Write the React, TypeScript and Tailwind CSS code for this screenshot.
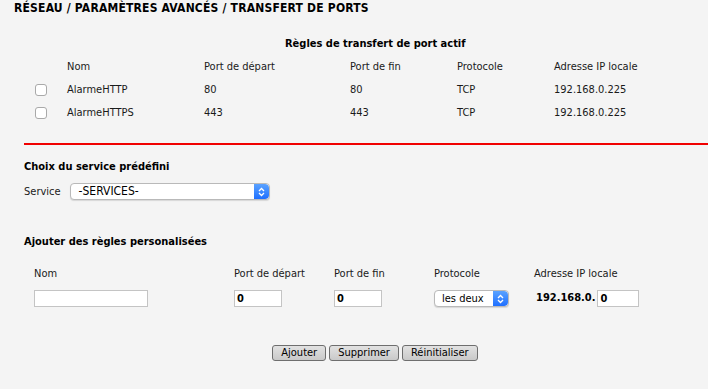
const ACTIVE_RULES = [
  { name: "AlarmeHTTP", start: "80", end: "80", proto: "TCP", ip: "192.168.0.225" },
  { name: "AlarmeHTTPS", start: "443", end: "443", proto: "TCP", ip: "192.168.0.225" },
];

function Arrows() {
  return (
    <div className="flex h-full w-[15px] items-center justify-center rounded-r-[4px] bg-gradient-to-b from-[#5aa2ff] to-[#1f6fff]">
      <svg width="7" height="10" viewBox="0 0 7 10" fill="none" stroke="white" strokeWidth="1.3">
        <path d="M1 4 L3.5 1.5 L6 4" />
        <path d="M1 6 L3.5 8.5 L6 6" />
      </svg>
    </div>
  );
}

function FakeSelect({ value, className, textClass }: { value: string; className: string; textClass: string }) {
  return (
    <div
      className={`flex h-[17px] items-stretch overflow-hidden rounded-[4px] border border-[#b9b9b9] bg-white shadow-[0_1px_1px_rgba(0,0,0,0.12)] ${className}`}
    >
      <div className={`flex-1 leading-[15px] text-black ${textClass}`}>{value}</div>
      <Arrows />
    </div>
  );
}

function Checkbox() {
  return <div className="h-[12px] w-[12px] rounded-[3px] border border-[#a9a9a9] bg-white" />;
}

export default function App() {
  return (
    <main
      className="min-h-[389px] w-[708px] bg-[#f4f4f4] text-[11px] text-[#1a1a1a]"
      style={{ fontFamily: '"DejaVu Sans Condensed", "DejaVu Sans", sans-serif' }}
    >
      <h1 className="pl-[14px] pt-[1px] text-[12px] font-bold leading-[15px] tracking-[0.2px] text-black">
        RÉSEAU / PARAMÈTRES AVANCÉS / TRANSFERT DE PORTS
      </h1>

      <section className="pl-[35px] pt-[20px]">
        <div className="pl-[250px] text-[11px] font-bold leading-[15px] text-black">
          Règles de transfert de port actif
        </div>
        <div className="mt-[8px] grid grid-cols-[32px_137px_146px_107px_97px_1fr] items-center leading-[15px]">
          <div />
          <div>Nom</div>
          <div>Port de départ</div>
          <div>Port de fin</div>
          <div>Protocole</div>
          <div>Adresse IP locale</div>
        </div>
        {ACTIVE_RULES.map((r) => (
          <div
            key={r.name}
            className="mt-[8px] grid grid-cols-[32px_137px_146px_107px_97px_1fr] items-center leading-[15px]"
          >
            <Checkbox />
            <div>{r.name}</div>
            <div>{r.start}</div>
            <div>{r.end}</div>
            <div>{r.proto}</div>
            <div>{r.ip}</div>
          </div>
        ))}
      </section>

      <div className="ml-[24px] mt-[23px] h-[2px] bg-[#f00000]" />

      <section className="pl-[24px] pt-[14px]">
        <div className="font-bold leading-[15px] text-black">Choix du service prédéfini</div>
        <div className="mt-[9px] flex items-center gap-[9px]">
          <span className="leading-[15px]">Service</span>
          <FakeSelect value="-SERVICES-" className="w-[200px]" textClass="pl-[8px] text-[12px]" />
        </div>
      </section>

      <section className="pl-[24px] pt-[34px]">
        <div className="font-bold leading-[15px] text-black">Ajouter des règles personalisées</div>
        <div className="mt-[17px] grid grid-cols-[200px_100px_100px_100px_1fr] pl-[10px] leading-[15px]">
          <div>Nom</div>
          <div>Port de départ</div>
          <div>Port de fin</div>
          <div>Protocole</div>
          <div>Adresse IP locale</div>
        </div>
        <div className="mt-[9px] grid grid-cols-[200px_100px_100px_100px_1fr] items-center pl-[10px]">
          <div className="h-[17px] w-[114px] border border-[#c4c4c4] bg-white" />
          <div className="h-[17px] w-[48px] border border-[#c4c4c4] bg-white pl-[2px] text-[11px] font-bold leading-[15px] text-black">
            0
          </div>
          <div className="h-[17px] w-[48px] border border-[#c4c4c4] bg-white pl-[2px] text-[11px] font-bold leading-[15px] text-black">
            0
          </div>
          <FakeSelect value="les deux" className="w-[75px]" textClass="pl-[7px] text-[11px]" />
          <div className="flex items-center gap-[2px] pl-[2px]">
            <span className="font-bold text-black">192.168.0.</span>
            <div className="h-[17px] w-[42px] border border-[#c4c4c4] bg-white pl-[2px] font-bold leading-[15px] text-black">
              0
            </div>
          </div>
        </div>
      </section>

      <div className="mt-[38px] flex justify-center gap-[3px] pl-[42px]">
        {["Ajouter", "Supprimer", "Réinitialiser"].map((b) => (
          <button
            key={b}
            className="h-[16px] rounded-[3px] border border-[#6e6e6e] bg-gradient-to-b from-[#e2e2e2] to-[#c9c9c9] px-[8px] text-[11px] leading-[14px] text-black"
          >
            {b}
          </button>
        ))}
      </div>
    </main>
  );
}
